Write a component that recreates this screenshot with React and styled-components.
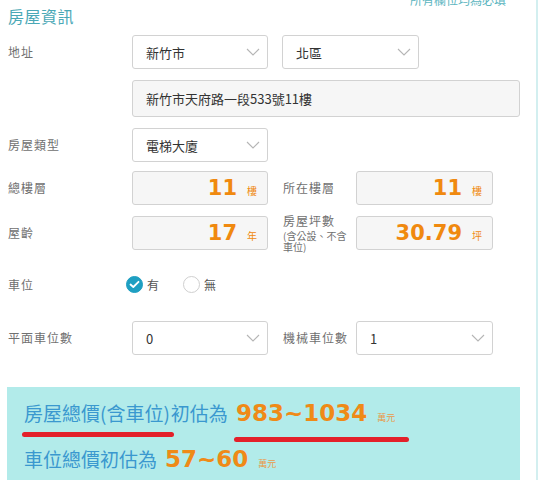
import React from 'react'
import styled, { createGlobalStyle } from 'styled-components'

// styled----------------------------------

const GlobalStyle = createGlobalStyle`
  html, body { margin: 0; padding: 0; background: #fff; }
  body { font-family: "Noto Sans CJK TC", "Noto Sans", sans-serif; }
`

const Page = styled.div`
  width: 528px;
  height: 480px;
  padding-left: 8px;
  border-right: 2px solid #d3eff0;
  overflow: hidden;
  box-sizing: content-box;
`

const Header = styled.div`
  display: flex;
  justify-content: space-between;
  align-items: flex-start;
  width: 512px;
  padding-top: 6px;
`

const Title = styled.div`
  font-size: 16px;
  line-height: 20px;
  color: #4aa8b6;
  letter-spacing: 0.5px;
`

const Note = styled.div`
  margin-top: -15px;
  margin-right: 14px;
  font-size: 12px;
  color: #5bb5c0;
`

const Row = styled.div`
  display: flex;
  align-items: center;
  margin-top: ${p => p.$mt || 10}px;
`

const Label = styled.div`
  flex: none;
  width: ${p => p.$w || 124}px;
  font-size: 12px;
  line-height: 14px;
  color: #707070;
  letter-spacing: 1px;
`

const SubLabel = styled.div`
  font-size: 10px;
  line-height: 11px;
  letter-spacing: 0;
  margin-top: 2px;
`

const Field = styled.div`
  flex: none;
  box-sizing: border-box;
  width: ${p => p.$w || 136}px;
  height: ${p => p.$h || 34}px;
  margin-right: ${p => p.$mr || 0}px;
  display: flex;
  align-items: center;
  justify-content: ${p => p.$right ? 'flex-end' : 'space-between'};
  padding: 0 ${p => p.$right ? 10 : 7}px 0 13px;
  border: 1px solid #d2d2d2;
  border-radius: 3px;
  background: ${p => p.$filled ? '#f6f6f6' : '#fff'};
  font-size: 13px;
  color: #333;
`

const Num = styled.span`
  font-family: "DejaVu Sans", Verdana, sans-serif;
  font-weight: bold;
  font-size: 21px;
  color: #f0890f;
  line-height: 1;
`

const Unit = styled.span`
  font-size: 10px;
  color: #f0890f;
  margin-left: 10px;
  margin-top: 4px;
`

const Radios = styled.div`
  display: flex;
  align-items: center;
  gap: 4px;
  margin-left: -6px;
`

const Radio = styled.span`
  box-sizing: border-box;
  width: 17px;
  height: 17px;
  border-radius: 50%;
  display: inline-flex;
  align-items: center;
  justify-content: center;
  border: 1px solid ${p => p.$on ? '#1e9fc2' : '#cfcfcf'};
  background: ${p => p.$on ? '#1e9fc2' : '#fff'};
`

const RadioText = styled.span`
  font-size: 12px;
  color: #555;
  margin-right: 20px;
`

const Result = styled.div`
  margin-top: 32px;
  width: 513px;
  margin-left: -1px;
  background: #b2ebea;
  padding: 13px 0 12px 17px;
  box-sizing: border-box;
  height: 120px;
`

const Line = styled.div`
  display: flex;
  align-items: baseline;
  font-size: 19px;
  line-height: 26px;
  color: #3a98cf;
  margin-top: ${p => p.$mt || 0}px;
`

const Marked = styled.span`
  position: relative;
  display: inline-flex;
  align-items: baseline;
  margin-left: ${p => p.$ml || 0}px;
  margin-right: ${p => p.$mr || 0}px;

  &::after {
    content: "";
    position: absolute;
    left: -2px;
    right: ${p => p.$ext || -4}px;
    bottom: -11px;
    height: 5px;
    border-radius: 3px;
    background: #e3202a;
  }
`

const BigNum = styled.span`
  font-family: "DejaVu Sans", Verdana, sans-serif;
  font-weight: bold;
  font-size: 23px;
  color: #ef8a17;
  margin-left: ${p => p.$ml ?? 8}px;
`

const SmallUnit = styled.span`
  font-size: 9px;
  color: #e99a4a;
  margin-left: 10px;
`

// parts-----------------------------------

const Chevron = () => (
  <svg width='14' height='8' viewBox='0 0 14 8'>
    <polyline points='1,1 7,7 13,1' fill='none' stroke='#b5b5b5' strokeWidth='1.1' />
  </svg>
)

const Check = () => (
  <svg width='11' height='9' viewBox='0 0 11 9'>
    <polyline points='1.5,4.5 4.3,7 9.5,1.8' fill='none' stroke='#fff' strokeWidth='1.8' strokeLinecap='round' strokeLinejoin='round' />
  </svg>
)

const Select = ({ value, ...rest }) => (
  <Field {...rest}>
    <span>{value}</span>
    <Chevron />
  </Field>
)

const Value = ({ num, unit, ...rest }) => (
  <Field $filled $right {...rest}>
    <Num>{num}</Num>
    <Unit>{unit}</Unit>
  </Field>
)

// component-------------------------------

const App = () => {
  return <Page>
    <GlobalStyle />
    <Header>
      <Title>房屋資訊</Title>
      <Note>*所有欄位均為必填</Note>
    </Header>

    <Row $mt={9}>
      <Label>地址</Label>
      <Select value='新竹市' $mr={14} />
      <Select value='北區' $w={137} />
    </Row>
    <Row $mt={11}>
      <Label />
      <Field $w={388} $h={37} $filled>新竹市天府路一段533號11樓</Field>
    </Row>
    <Row $mt={11}>
      <Label>房屋類型</Label>
      <Select value='電梯大廈' />
    </Row>
    <Row $mt={9}>
      <Label>總樓層</Label>
      <Value num='11' unit='樓' $mr={15} />
      <Label $w={73}>所在樓層</Label>
      <Value num='11' unit='樓' $w={137} />
    </Row>
    <Row $mt={9}>
      <Label>屋齡</Label>
      <Value num='17' unit='年' $mr={15} />
      <Label $w={73}>
        房屋坪數
        <SubLabel>(含公設、不含車位)</SubLabel>
      </Label>
      <Value num='30.79' unit='坪' $w={137} />
    </Row>
    <Row $mt={24}>
      <Label>車位</Label>
      <Radios>
        <Radio $on><Check /></Radio>
        <RadioText>有</RadioText>
        <Radio />
        <RadioText>無</RadioText>
      </Radios>
    </Row>
    <Row $mt={28}>
      <Label>平面車位數</Label>
      <Select value='0' $mr={15} />
      <Label $w={73}>機械車位數</Label>
      <Select value='1' $w={137} />
    </Row>

    <Result>
      <Line>
        <Marked $mr={1}>房屋總價(含車位)</Marked>
        初估為
        <Marked $ml={8} $ext={-14}>
          <BigNum $ml={0}>983~1034</BigNum>
          <SmallUnit>萬元</SmallUnit>
        </Marked>
      </Line>
      <Line $mt={15}>
        車位總價初估為
        <BigNum>57~60</BigNum>
        <SmallUnit>萬元</SmallUnit>
      </Line>
    </Result>
  </Page>
}

export default App
